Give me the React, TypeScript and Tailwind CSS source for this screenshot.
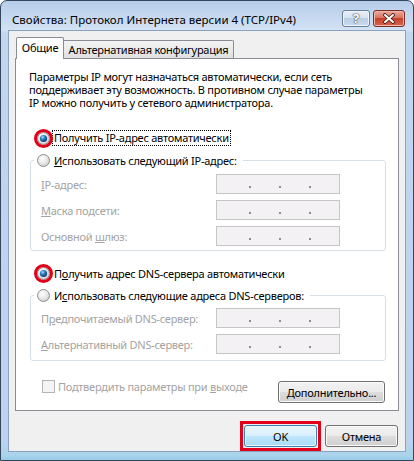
import React from "react";

const font = "font-['Noto_Sans','Liberation_Sans',sans-serif]";

function Radio({ checked = false, ring = false }: { checked?: boolean; ring?: boolean }) {
  return (
    <span className="relative inline-block w-[13px] h-[13px] shrink-0">
      <svg width="13" height="13" viewBox="0 0 13 13" className="block">
        <defs>
          <radialGradient id="rbody" cx="40%" cy="35%" r="70%">
            <stop offset="0" stopColor="#ffffff" />
            <stop offset="0.6" stopColor="#e6e6e6" />
            <stop offset="1" stopColor="#c9c9c9" />
          </radialGradient>
          <radialGradient id="rdot" cx="38%" cy="32%" r="70%">
            <stop offset="0" stopColor="#a9dcfa" />
            <stop offset="0.45" stopColor="#2a7cc1" />
            <stop offset="1" stopColor="#0b3a6e" />
          </radialGradient>
        </defs>
        <circle cx="6.5" cy="6.5" r="6" fill="url(#rbody)" stroke="#8d8f91" strokeWidth="1" />
        {checked && <circle cx="6.5" cy="6.5" r="3.6" fill="url(#rdot)" />}
      </svg>
      {ring && (
        <span className="absolute -inset-[3px] rounded-full border-[3px] border-[#e2001a]" />
      )}
    </span>
  );
}

function IpBox() {
  return (
    <div className="w-[124px] h-[20px] border border-[#c6c6c6] bg-[#f4f1f4] flex items-end pb-[5px] pl-[32px] gap-[28px]">
      <span className="w-[2px] h-[2px] bg-[#8e8e8e]" />
      <span className="w-[2px] h-[2px] bg-[#8e8e8e]" />
      <span className="w-[2px] h-[2px] bg-[#8e8e8e]" />
    </div>
  );
}

function FieldRow({ children }: { children: React.ReactNode }) {
  return (
    <div className="flex items-center h-[20px]">
      <div className="w-[175px] text-[#a3a3a3] leading-[15px] whitespace-nowrap">{children}</div>
      <IpBox />
    </div>
  );
}

const btn =
  "h-[22px] rounded-[3px] border border-[#707070] shadow-[inset_0_0_0_1px_#fbfbfb] bg-[linear-gradient(180deg,#f2f2f2_0%,#ebebeb_48%,#dddddd_52%,#cfcfcf_100%)] flex items-center justify-center leading-[15px] text-black";

export default function App() {
  return (
    <div className={`w-[414px] h-[461px] bg-white ${font} text-[11px] text-black`}>
      <div className="w-full h-full rounded-t-[7px] border border-[#34465b] bg-[linear-gradient(180deg,#b6cde9_0px,#c9dbf1_20px,#d3e2f4_29px,#c1d6ef_32px,#bcd2ed_440px,#a9d3ec_455px,#8fc6e6_461px)] flex flex-col">
        {/* title bar */}
        <div className="h-[29px] flex items-start shrink-0">
          <div className="pl-[11px] pt-[11px] leading-[15px] text-[11.5px] text-black whitespace-nowrap">
            Свойства: Протокол Интернета версии 4 (TCP/IPv4)
          </div>
          <div className="ml-auto mt-[9px] mr-[8px] flex gap-[3px]">
            <div className="w-[28px] h-[17px] rounded-[3px] border border-[#6b7f99] shadow-[inset_0_0_0_1px_#eef4fb] bg-[linear-gradient(180deg,#e9f0f8_0%,#d6e2f0_45%,#b9cde4_50%,#c9daee_100%)] flex items-center justify-center">
              <span className="font-bold text-[13px] leading-[13px] text-white [text-shadow:0_0_1px_#3d4c60,0_0_1px_#3d4c60,0_0_2px_#5d6d82]">?</span>
            </div>
            <div className="w-[32px] h-[17px] rounded-[3px] border border-[#7c2f27] shadow-[inset_0_0_0_1px_#efb3a8] bg-[linear-gradient(180deg,#eaa99c_0%,#d97462_45%,#c5402b_50%,#d4664f_100%)] flex items-center justify-center">
              <svg width="14" height="11" viewBox="0 0 14 11">
                <path d="M3 2 L11 9 M11 2 L3 9" stroke="#3d1812" strokeWidth="3.6" strokeLinecap="round" />
                <path d="M3 2 L11 9 M11 2 L3 9" stroke="#ffffff" strokeWidth="2" strokeLinecap="round" />
              </svg>
            </div>
          </div>
        </div>

        {/* client area */}
        <div className="mx-[7px] mb-[8px] flex-1 border border-[#8ba2bf] bg-[#f0f0f0] px-[6px] pt-[6px] flex flex-col tracking-[-0.25px]">
          {/* tabs */}
          <div className="h-[21px] flex items-end">
            <div className="relative z-10 ml-[1px] w-[48px] h-[22px] -mb-px rounded-t-[2px] border border-b-0 border-[#898c95] bg-white flex justify-center pt-[2px] leading-[15px]">
              Общие
            </div>
            <div className="w-[170px] h-[18px] rounded-tr-[2px] border border-l-0 border-b-0 border-[#898c95] bg-[linear-gradient(180deg,#f3f3f3_0%,#ebebeb_50%,#dedede_100%)] flex justify-center pt-[1px] leading-[15px] whitespace-nowrap">
              Альтернативная конфигурация
            </div>
          </div>

          {/* panel */}
          <div className="w-[384px] h-[353px] border border-[#898c95] bg-white flex flex-col">
            <div className="pl-[13px] pt-[11px] flex flex-col whitespace-nowrap">
              <span className="h-[13px] leading-[13px]">Параметры IP могут назначаться автоматически, если сеть</span>
              <span className="h-[13px] leading-[13px]">поддерживает эту возможность. В противном случае параметры</span>
              <span className="h-[13px] leading-[13px]">IP можно получить у сетевого администратора.</span>
            </div>

            {/* radio 1 */}
            <div className="mt-[21px] ml-[21px] h-[16px] flex items-center">
              <Radio checked ring />
              <span className="ml-[2px] h-[16px] border border-dotted border-black px-[1px] leading-[14px] whitespace-nowrap">
                Получить IP-адрес автоматически
              </span>
            </div>

            {/* group 1 */}
            <div className="mt-[14px] ml-[14px] w-[356px] h-[91px] border border-[#d5dfe5] rounded-[3px] flex flex-col">
              <div className="-mt-[9px] ml-[3px] pl-[3px] pr-[6px] h-[16px] w-fit bg-white flex items-center">
                <Radio />
                <span className="ml-[4px] leading-[15px] whitespace-nowrap">
                  <span className="underline">И</span>спользовать следующий IP-адрес:
                </span>
              </div>
              <div className="mt-[6px] pl-[10px] flex flex-col gap-[6px]">
                <FieldRow>
                  <span className="underline">I</span>P-адрес:
                </FieldRow>
                <FieldRow>
                  <span className="underline">М</span>аска подсети:
                </FieldRow>
                <FieldRow>
                  Основной <span className="underline">ш</span>люз:
                </FieldRow>
              </div>
            </div>

            {/* radio 3 */}
            <div className="mt-[14px] ml-[21px] h-[16px] flex items-center">
              <Radio checked ring />
              <span className="ml-[4px] leading-[15px] whitespace-nowrap">
                П<span className="underline">о</span>лучить адрес DNS-сервера автоматически
              </span>
            </div>

            {/* group 2 */}
            <div className="mt-[14px] ml-[14px] w-[356px] h-[66px] border border-[#d5dfe5] rounded-[3px] flex flex-col">
              <div className="-mt-[9px] ml-[3px] pl-[3px] pr-[6px] h-[16px] w-fit bg-white flex items-center">
                <Radio />
                <span className="ml-[4px] leading-[15px] whitespace-nowrap">
                  И<span className="underline">с</span>пользовать следующие адреса DNS-серверов:
                </span>
              </div>
              <div className="mt-[5px] pl-[10px] flex flex-col gap-[6px]">
                <FieldRow>
                  П<span className="underline">р</span>едпочитаемый DNS-сервер:
                </FieldRow>
                <FieldRow>
                  <span className="underline">А</span>льтернативный DNS-сервер:
                </FieldRow>
              </div>
            </div>

            {/* checkbox + advanced */}
            <div className="mt-[18px] flex items-start">
              <div className="ml-[26px] h-[15px] flex items-center">
                <span className="w-[13px] h-[13px] border border-[#b4b4b4] bg-[#f4f4f4] shrink-0" />
                <span className="ml-[3px] leading-[15px] text-[#a3a3a3] whitespace-nowrap">
                  Подтвердить параметры при <span className="underline">в</span>ыходе
                </span>
              </div>
              <div className={`ml-auto mr-[13px] mt-[2px] w-[107px] ${btn}`}>
                <span>
                  <span className="underline">Д</span>ополнительно...
                </span>
              </div>
            </div>
          </div>

          {/* bottom buttons */}
          <div className="mt-[14px] flex justify-end gap-[8px] pr-[1px]">
            <div className="relative">
              <div className="w-[73px] h-[22px] rounded-[3px] border border-[#3c7fb1] shadow-[inset_0_0_0_1px_#e9f6fd] bg-[linear-gradient(180deg,#eaf6fd_0%,#d9f0fc_48%,#bee6fd_52%,#a9dbf6_100%)] flex items-center justify-center leading-[15px]">
                OK
              </div>
              <span className="absolute -inset-[4px] border-[3px] border-[#e2001a]" />
            </div>
            <div className={`w-[73px] ${btn}`}>Отмена</div>
          </div>
        </div>
      </div>
    </div>
  );
}
